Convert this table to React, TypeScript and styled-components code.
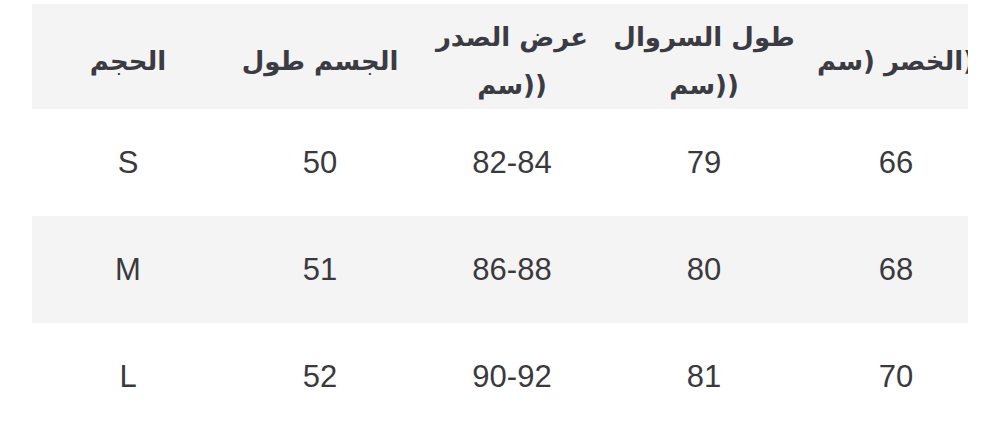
import React from 'react';
import styled, { createGlobalStyle } from 'styled-components';

const GlobalStyle = createGlobalStyle`
  html, body {
    margin: 0;
    padding: 0;
    background: #ffffff;
  }
`;

// ")" is isolated so it renders after the Arabic word, as in the source chart
const CM = '(سم\u2066)\u2069';

const headers = ['الحجم', 'الجسم طول', `عرض الصدر ${CM}`, `طول السروال ${CM}`, `الخصر ${CM}`];

const rows = [
  ['S', '50', '82-84', '79', '66'],
  ['M', '51', '86-88', '80', '68'],
  ['L', '52', '90-92', '81', '70'],
];

const SizeChart = () => {
  return (
    <Wrapper>
      <Table>
        <thead>
          <Row $shade>
            {headers.map((h) => (
              <HeadCell key={h}>{h}</HeadCell>
            ))}
          </Row>
        </thead>
        <tbody>
          {rows.map((r, i) => (
            <Row key={r[0]} $shade={i % 2 === 1}>
              {r.map((v, j) => (
                <Cell key={j}>{v}</Cell>
              ))}
            </Row>
          ))}
        </tbody>
      </Table>
    </Wrapper>
  );
};

export default function App() {
  return (
    <>
      <GlobalStyle />
      <SizeChart />
    </>
  );
}

const Wrapper = styled.div`
  margin: 4px 0 0 32px;
  width: 936px;
  overflow: hidden;
`;

const Table = styled.table`
  width: 960px;
  table-layout: fixed;
  border-collapse: collapse;
  border-spacing: 0;
`;

const Row = styled.tr<{ $shade?: boolean }>`
  background: ${(p) => (p.$shade ? '#f4f4f4' : '#ffffff')};
`;

const HeadCell = styled.th`
  height: 105px;
  padding: 9px 0 0;
  box-sizing: border-box;
  text-align: center;
  vertical-align: middle;
  font-family: 'DejaVu Sans', 'Liberation Sans', sans-serif;
  font-weight: bold;
  font-size: 26px;
  line-height: 48px;
  color: #3b3b43;
`;

const Cell = styled.td`
  height: 107px;
  padding: 0;
  text-align: center;
  vertical-align: middle;
  font-family: 'Liberation Sans', Arial, sans-serif;
  font-size: 31px;
  color: #3a3a3e;
`;
